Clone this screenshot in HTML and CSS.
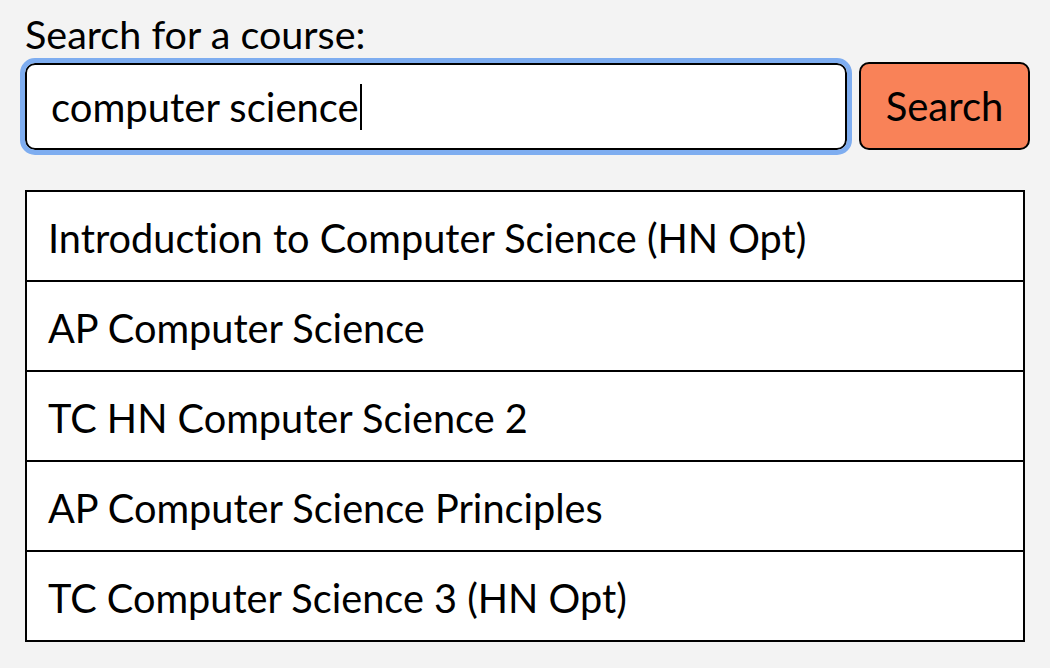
FILE: index.html
```html
<!DOCTYPE html>
<html>
<head>
<meta charset="utf-8">
<link rel="stylesheet" href="styles.css">
</head>
<body>
<div class="page">
  <label class="label" for="q">Search for a course:</label>
  <div class="search-row">
    <div class="input"><span class="value">computer science</span><span class="caret"></span></div>
    <button class="btn">Search</button>
  </div>
  <ul class="results">
    <li>Introduction to Computer Science (HN Opt)</li>
    <li>AP Computer Science</li>
    <li>TC HN Computer Science 2</li>
    <li>AP Computer Science Principles</li>
    <li>TC Computer Science 3 (HN Opt)</li>
  </ul>
</div>
</body>
</html>
```
FILE: styles.css
```css
html, body {
  margin: 0;
  padding: 0;
  background: #f3f3f3;
  font-family: Lato, "Open Sans", sans-serif;
  color: #000;
  font-variant-ligatures: none;
}
.page {
  padding: 12px 0 0 25px;
  width: 1005px;
}
.label {
  display: block;
  font-size: 39.5px;
  line-height: 44px;
}
.search-row {
  display: flex;
  align-items: flex-start;
  margin-top: 6px;
}
.input {
  box-sizing: border-box;
  width: 822px;
  height: 87px;
  margin-top: 1px;
  background: #fff;
  border: 2px solid #000;
  border-radius: 10px;
  outline: 5px solid #7eadf0;
  display: flex;
  align-items: center;
  padding-left: 24px;
  font-size: 40px;
}
.caret {
  display: inline-block;
  width: 2px;
  height: 46px;
  background: #000;
  margin-left: 1px;
}
.btn {
  box-sizing: border-box;
  margin-left: 12px;
  width: 171px;
  height: 88px;
  background: #f98258;
  border: 2px solid #000;
  border-radius: 10px;
  font-family: Lato, sans-serif;
  font-size: 40px;
  color: #000;
  padding: 0;
}
.results {
  list-style: none;
  margin: 40px 0 0 0;
  padding: 0;
  width: 1000px;
  box-sizing: border-box;
  border: 2px solid #000;
  background: #fff;
}
.results li {
  height: 86px;
  padding: 2px 0 0 21px;
  display: flex;
  align-items: center;
  font-size: 39.7px;
  border-top: 2px solid #000;
}
.results li:first-child {
  border-top: none;
}
```
